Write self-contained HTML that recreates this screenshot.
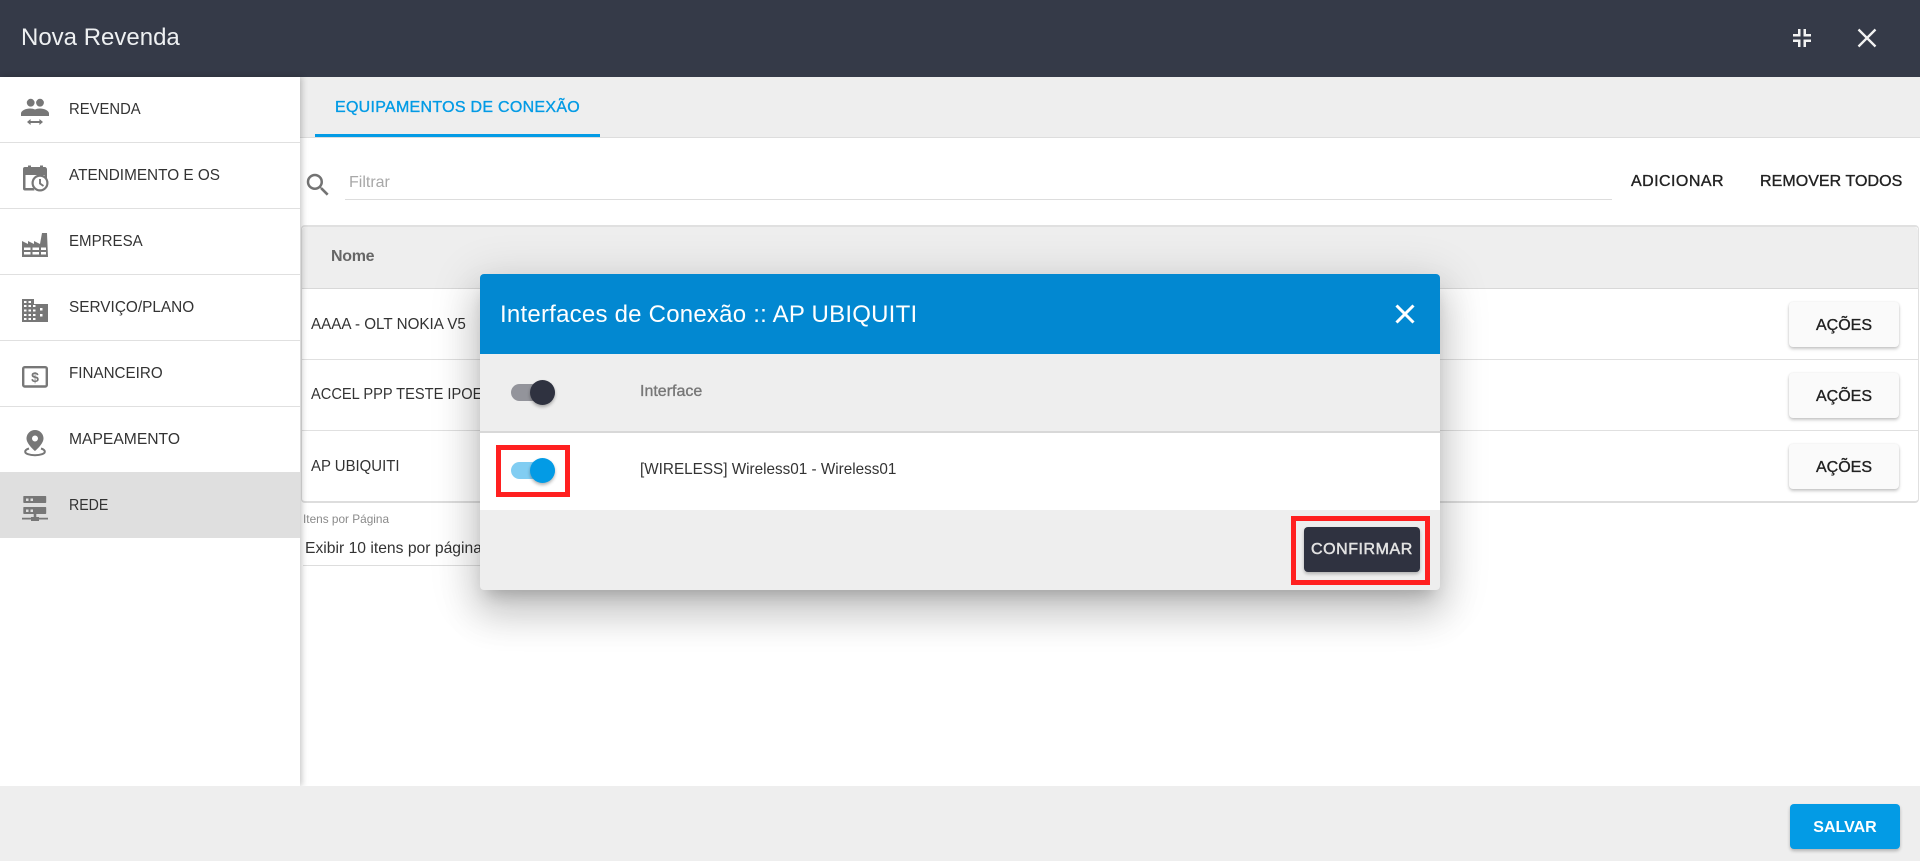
<!DOCTYPE html>
<html lang="pt">
<head>
<meta charset="utf-8">
<title>Nova Revenda</title>
<style>
*{box-sizing:border-box}
html,body{margin:0;padding:0;width:1920px;height:861px;overflow:hidden;background:#fff;font-family:"Liberation Sans",sans-serif;color:#333}
.a{position:absolute;white-space:nowrap}
.t{position:absolute;white-space:nowrap;line-height:20px;font-size:16px;transform-origin:0 50%}
.m{-webkit-text-stroke:.35px currentColor}
.line{position:absolute;background:#e0e0e0;height:1px}
svg{position:absolute;display:block}
.btn{position:absolute;left:1789px;width:110px;height:45px;background:#fafafa;border-radius:4px;box-shadow:0 2px 3px rgba(0,0,0,.22),0 0 2px rgba(0,0,0,.08);text-align:center;line-height:47px;font-size:16px;color:#222;-webkit-text-stroke:.35px #222}
</style>
</head>
<body>
<!-- header -->
<div class="a" style="left:0;top:0;width:1920px;height:77px;background:#353a48"></div>
<div class="a" style="left:21px;top:23px;font-size:24px;line-height:30px;color:#eef0f2">Nova Revenda</div>
<svg style="left:1790px;top:26px" width="24" height="24" viewBox="0 0 24 24"><path fill="#f2f2f2" d="M3 16h5v5h2.500v-7.500H3zM16 21v-5h5v-2.500h-7.500V21zM8 8H3v2.500h7.500V3H8zM16 8V3h-2.500v7.500H21V8z"/></svg>
<svg style="left:1855px;top:27px" width="24" height="24" viewBox="0 0 24 24"><path stroke="#f2f2f2" stroke-width="2.300" fill="none" d="M3.500 2.500l17 17M20.500 2.500l-17 17"/></svg>

<!-- sidebar -->
<div class="a" style="left:0;top:77px;width:300px;height:709px;background:#fff;box-shadow:2px 0 6px rgba(0,0,0,.22);z-index:2"></div>
<div style="position:absolute;left:0;top:0;z-index:3">
<div class="line" style="left:0;top:142px;width:300px"></div>
<div class="line" style="left:0;top:208px;width:300px"></div>
<div class="line" style="left:0;top:274px;width:300px"></div>
<div class="line" style="left:0;top:340px;width:300px"></div>
<div class="line" style="left:0;top:406px;width:300px"></div>
<div class="a" style="left:0;top:472px;width:300px;height:66px;background:#dfdfdf"></div>
<div class="t" style="left:69px;top:100px;transform:scaleX(.927)">REVENDA</div>
<div class="t" style="left:69px;top:166px;transform:scaleX(.958)">ATENDIMENTO E OS</div>
<div class="t" style="left:69px;top:232px;transform:scaleX(.942)">EMPRESA</div>
<div class="t" style="left:69px;top:298px;transform:scaleX(.96)">SERVIÇO/PLANO</div>
<div class="t" style="left:69px;top:364px;transform:scaleX(.949)">FINANCEIRO</div>
<div class="t" style="left:69px;top:430px;transform:scaleX(.978)">MAPEAMENTO</div>
<div class="t" style="left:69px;top:496px;transform:scaleX(.885)">REDE</div>

<svg style="left:20px;top:96px" width="30" height="32" viewBox="0 0 30 32"><g fill="#777"><circle cx="10.700" cy="6.700" r="3.900"/><circle cx="20" cy="6.700" r="3.900"/><path d="M1 20v-2.500c0-3 5-5 9-5 2 0 3.800.4 5 1 1.400-.6 3-1 5-1 4 0 9 2 9 5V20z"/><path d="M7 26l3.600-3v2h8.800v-2l3.600 3-3.600 3v-2h-8.800v2z"/></g></svg>
<svg style="left:22px;top:164px" width="28" height="30" viewBox="0 0 28 30"><path fill="#777" d="M3 3h3V1.500h3V3h9V1.500h3V3h1.500C24 3 25 4 25 5.500V14l-2.500.4V11H3.500v13h8c.2.900.6 1.700 1 2.500H3a2 2 0 0 1-2-2V5a2 2 0 0 1 2-2z"/><circle cx="18" cy="19" r="7.400" fill="#fff" stroke="#777" stroke-width="2.200"/><path d="M18 15v4.500l3.500 2.500" fill="none" stroke="#777" stroke-width="1.900"/></svg>
<svg style="left:22px;top:232px" width="26" height="25" viewBox="0 0 26 25"><path fill="#777" fill-rule="evenodd" d="M0 9l6 3V9l6 3V9l6 3 2-11h5l1 24H0zM2 15.500V18h6.500v-2.500zm8.500 0V18H17v-2.500zm8.500 0V18h5v-2.500zM2 20v2.500h6.500V20zm8.500 0v2.500H17V20zm8.500 0v2.500h5V20z"/></svg>
<svg style="left:22px;top:299px" width="26" height="23" viewBox="0 0 26 23"><path fill="#777" d="M0 0h12v5h14v18H0z"/><g fill="#fff"><rect x="2" y="2" width="2.500" height="2"/><rect x="6.500" y="2" width="2.500" height="2"/><rect x="2" y="6" width="2.500" height="2"/><rect x="6.500" y="6" width="2.500" height="2"/><rect x="11" y="6" width="2.500" height="2"/><rect x="2" y="10.500" width="2.500" height="2"/><rect x="6.500" y="10.500" width="2.500" height="2"/><rect x="11" y="10.500" width="2.500" height="2"/><rect x="2" y="15" width="2.500" height="2"/><rect x="6.500" y="15" width="2.500" height="2"/><rect x="11" y="15" width="2.500" height="2"/><rect x="2" y="19" width="2.500" height="2"/><rect x="6.500" y="19" width="2.500" height="2"/><rect x="11" y="19" width="2.500" height="2"/><rect x="18" y="9" width="2.500" height="2.500"/><rect x="18" y="15" width="2.500" height="2.500"/></g></svg>
<svg style="left:22px;top:365px" width="26" height="24" viewBox="0 0 26 24"><rect x="1.200" y="2.200" width="23.600" height="19.300" rx="1.500" fill="none" stroke="#777" stroke-width="2.400"/><text x="13" y="17" text-anchor="middle" font-family="'Liberation Sans',sans-serif" font-size="14" font-weight="700" fill="#777">$</text></svg>
<svg style="left:24px;top:429px" width="22" height="28" viewBox="0 0 22 28"><path fill="#777" fill-rule="evenodd" d="M11 1a8.500 8.500 0 0 0-8.500 8.500C2.500 15 11 22 11 22s8.500-7 8.500-12.500A8.500 8.500 0 0 0 11 1zm0 5.500a3 3 0 1 1 0 6 3 3 0 0 1 0-6z"/><path fill="none" stroke="#777" stroke-width="2" d="M5 19.500c-2.500.8-3.800 2-3.800 3.200 0 2 4.300 3.500 9.800 3.500s9.800-1.500 9.800-3.500c0-1.200-1.300-2.400-3.800-3.200"/></svg>
<svg style="left:22px;top:496px" width="26" height="26" viewBox="0 0 26 26"><path fill="#777" fill-rule="evenodd" d="M2 0h21.500a.7.700 0 0 1 .7.700v5.600a.7.700 0 0 1-.7.700H2a.7.700 0 0 1-.7-.7V.7A.7.700 0 0 1 2 0zm2 2.500V5h2.500V2.500zm4.500 0V5H11V2.500zM2 11h21.500a.7.700 0 0 1 .7.700v5.600a.7.700 0 0 1-.7.700H2a.7.700 0 0 1-.7-.7v-5.600A.7.700 0 0 1 2 11zm2 2.500V16h2.500v-2.500zm4.500 0V16H11v-2.500z"/><path fill="#777" d="M11.700 18h2.600v3H17v.8h9v1.700h-9V25H9v-1.500H0v-1.700h9V21h2.700z"/></svg>
</div>

<!-- tab bar -->
<div class="a" style="left:300px;top:77px;width:1620px;height:60px;background:#eee"></div>
<div class="a" style="left:300px;top:137px;width:1620px;height:1px;background:#ddd"></div>
<div class="a" style="left:315px;top:134px;width:285px;height:3px;background:#039be5"></div>
<div class="t m" style="left:335px;top:98px;color:#039be5;letter-spacing:.28px">EQUIPAMENTOS DE CONEXÃO</div>

<!-- filter -->
<svg style="left:303px;top:170px" width="30" height="30" viewBox="0 0 24 24"><path fill="#737373" d="M15.500 14h-.79l-.28-.27A6.470 6.470 0 0 0 16 9.500 6.500 6.500 0 1 0 9.500 16c1.610 0 3.090-.59 4.230-1.570l.27.28v.79l5 4.990L20.490 19l-4.990-5zm-6 0C7.010 14 5 11.990 5 9.500S7.010 5 9.500 5 14 7.010 14 9.500 11.990 14 9.500 14z"/></svg>
<div class="t" style="left:349px;top:173px;color:#a8a8a8">Filtrar</div>
<div class="a" style="left:345px;top:199px;width:1267px;height:1px;background:#ddd"></div>
<div class="t m" style="left:1631px;top:172px;color:#222;letter-spacing:.45px">ADICIONAR</div>
<div class="t m" style="left:1760px;top:172px;color:#222;letter-spacing:.05px">REMOVER TODOS</div>

<!-- table -->
<div class="a" style="left:301px;top:225px;width:1618px;height:278px;background:#fff;border:1px solid #e0e0e0;border-top:2px solid #e0e0e0;border-bottom:2px solid #ddd;border-radius:4px"></div>
<div class="a" style="left:302px;top:227px;width:1616px;height:61px;background:#eee;border-radius:4px 4px 0 0"></div>
<div class="a" style="left:302px;top:288px;width:1616px;height:1px;background:#d8d8d8"></div>
<div class="a" style="left:302px;top:359px;width:1616px;height:1px;background:#e0e0e0"></div>
<div class="a" style="left:302px;top:430px;width:1616px;height:1px;background:#e0e0e0"></div>
<div class="t" style="left:331px;top:247px;color:#666;font-weight:700;letter-spacing:-.3px">Nome</div>
<div class="t" style="left:311px;top:315px;transform:scaleX(.95)">AAAA - OLT NOKIA V5</div>
<div class="t" style="left:311px;top:385px;transform:scaleX(.915)">ACCEL PPP TESTE IPOE</div>
<div class="t" style="left:311px;top:457px;transform:scaleX(.933)">AP UBIQUITI</div>
<div class="btn" style="top:302px">AÇÕES</div>
<div class="btn" style="top:373px">AÇÕES</div>
<div class="btn" style="top:444px">AÇÕES</div>

<!-- pagination -->
<div class="t" style="left:303px;top:509px;font-size:12px;color:#8a8a8a;transform:scaleX(.985)">Itens por Página</div>
<div class="t" style="left:305px;top:539px;color:#333;transform:scaleX(.98)">Exibir 10 itens por página</div>
<div class="a" style="left:303px;top:565px;width:300px;height:1px;background:#ddd"></div>

<!-- footer -->
<div class="a" style="left:0;top:786px;width:1920px;height:75px;background:#eee;z-index:4"></div>
<div class="a" style="left:1790px;top:804px;width:110px;height:45px;background:#039be5;border-radius:4px;box-shadow:0 2px 3px rgba(0,0,0,.25);color:#fff;font-weight:700;font-size:16px;line-height:47px;text-align:center;z-index:5">SALVAR</div>

<!-- modal -->
<div class="a" style="left:480px;top:274px;width:960px;height:316px;border-radius:4px;background:#eee;box-shadow:0 11px 15px -7px rgba(0,0,0,.2),0 24px 38px 3px rgba(0,0,0,.14),0 9px 46px 8px rgba(0,0,0,.12);z-index:6;overflow:hidden">
  <div class="a" style="left:0;top:0;width:960px;height:80px;background:#0288d1"></div>
  <div class="a" style="left:20px;top:26px;font-size:24px;line-height:30px;color:#fff;letter-spacing:.23px">Interfaces de Conexão :: AP UBIQUITI</div>
  <svg style="left:914px;top:27px" width="22" height="26" viewBox="0 0 22 26"><path stroke="#fff" stroke-width="3" fill="none" d="M2.500 4.500l17 17M19.500 4.500l-17 17"/></svg>
  <div class="a" style="left:0;top:157px;width:960px;height:2px;background:#d8d8d8"></div>
  <div class="a" style="left:0;top:159px;width:960px;height:77px;background:#fff"></div>
  <div class="a" style="left:31px;top:110px;width:44px;height:17px;border-radius:9px;background:#93949b"></div>
  <div class="a" style="left:50px;top:106px;width:25px;height:25px;border-radius:50%;background:#2f3240;box-shadow:0 2px 3px rgba(0,0,0,.3)"></div>
  <div class="t m" style="left:160px;top:108px;color:#777">Interface</div>
  <div class="a" style="left:31px;top:188px;width:44px;height:17px;border-radius:9px;background:#81cdf2"></div>
  <div class="a" style="left:50px;top:184px;width:25px;height:25px;border-radius:50%;background:#039be5;box-shadow:0 2px 3px rgba(0,0,0,.3)"></div>
  <div class="t" style="left:160px;top:186px;color:#333;transform:scaleX(.955)">[WIRELESS] Wireless01 - Wireless01</div>
  <div class="a" style="left:16px;top:171px;width:74px;height:52px;border:5px solid #ff2020"></div>
  <div class="a" style="left:811px;top:242px;width:139px;height:69px;border:5px solid #ff2020"></div>
  <div class="a" style="left:824px;top:253px;width:116px;height:45px;background:#2f3240;border-radius:4px;box-shadow:0 2px 3px rgba(0,0,0,.25)"></div>
  <div class="t m" style="left:831px;top:266px;color:#e2e2e2;letter-spacing:.55px;-webkit-text-stroke:.5px #e2e2e2">CONFIRMAR</div>
</div>
</body>
</html>
